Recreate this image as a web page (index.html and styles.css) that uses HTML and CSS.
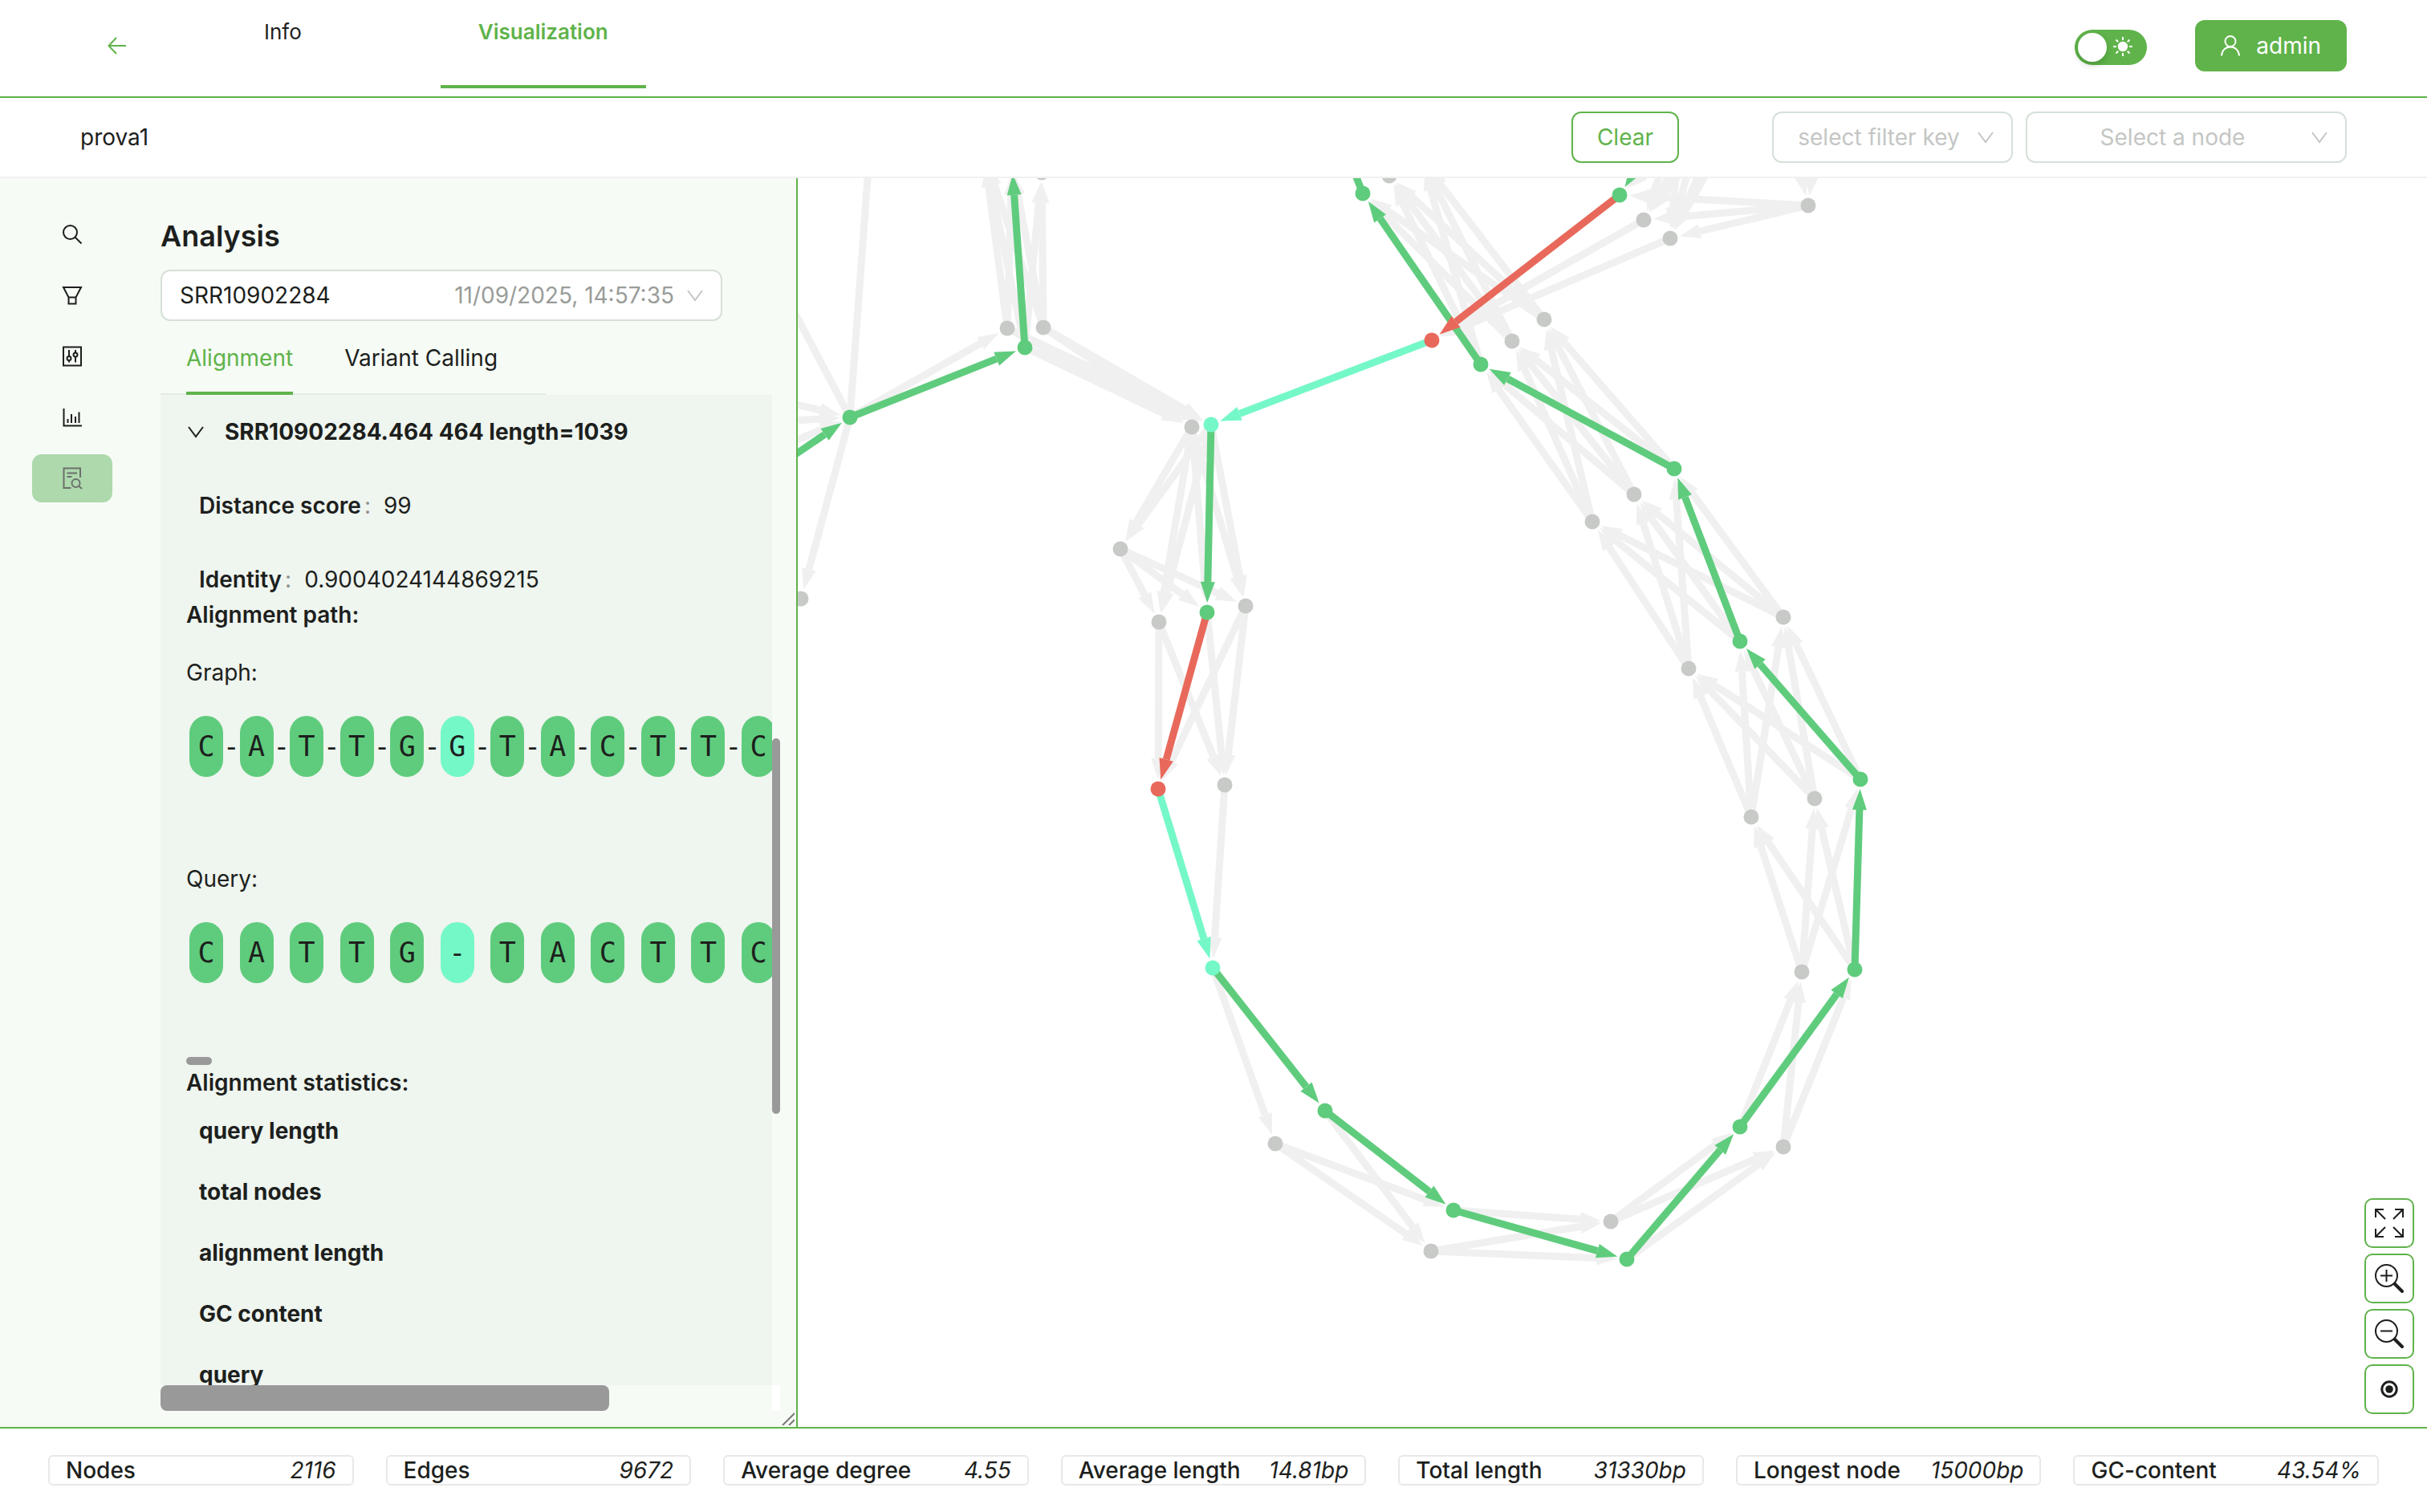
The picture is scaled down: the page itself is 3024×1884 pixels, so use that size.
FILE: index.html
```
<!DOCTYPE html>
<html lang="en">
<head>
    <meta charset="UTF-8">
    <meta name="viewport" content="width=device-width, initial-scale=1.0">
    <title>prova1 - Visualization</title>
    <link rel="stylesheet" href="styles.css">
</head>
<body>
    <header class="header">
        <a class="back" href="#" aria-label="Back">
            <svg class="icon" viewBox="0 0 24 24"><path d="M23 12H2M11 2L1.500 12L11 22"/></svg>
        </a>
        <nav class="main-tabs">
            <a class="main-tab" href="#">Info</a>
            <a class="main-tab active" href="#">Visualization</a>
        </nav>
        <div class="header-right">
            <label class="theme-switch">
                <input type="checkbox" role="switch" aria-label="Light theme" checked>
                <svg class="sun" viewBox="0 0 24 24">
                    <circle cx="12" cy="12" r="5.200"/>
                    <path d="M12 0V4M12 20V24M0 12H4M20 12H24M3.500 3.500L6.200 6.200M17.800 17.800L20.500 20.500M3.500 20.500L6.200 17.800M17.800 6.200L20.500 3.500"/>
                </svg>
            </label>
            <button class="user-btn" type="button">
                <svg class="icon" viewBox="0 0 24 26"><circle cx="12" cy="7.500" r="6.500"/><path d="M1 25.500C1.500 18.500 6 14.500 12 14.500S22.500 18.500 23 25.500"/></svg>
                admin
            </button>
        </div>
    </header>

    <div class="toolbar">
        <span class="graph-name">prova1</span>
        <button class="clear-btn" type="button">Clear</button>
        <div class="filters">
            <div class="select-box filter-key">
                <select aria-label="Filter key"><option>select filter key</option></select>
                <svg class="chevron" viewBox="0 0 20 14"><path d="M1 1L10 13L19 1"/></svg>
            </div>
            <div class="select-box filter-node">
                <select aria-label="Node"><option>Select a node</option></select>
                <svg class="chevron" viewBox="0 0 20 14"><path d="M1 1L10 13L19 1"/></svg>
            </div>
        </div>
    </div>

    <main class="workspace">
        <aside class="sidebar">
            <nav class="side-nav">
                <button type="button" aria-label="Search">
                    <svg class="icon" viewBox="0 0 24 24"><circle cx="9.500" cy="9.500" r="8.500"/><path d="M15.500 15.500L23.500 23.500"/></svg>
                </button>
                <button type="button" aria-label="Filter">
                    <svg class="icon" viewBox="0 0 24 24"><path d="M1 2H23L16.500 14.500V22.500H7.500V14.500ZM7.500 14.500H16.500"/></svg>
                </button>
                <button type="button" aria-label="Settings">
                    <svg class="icon" viewBox="0 0 24 24"><path d="M1 0.500H23V23.500H1ZM8 4V12M8 17V19.500M16 4V7.500M16 12.500V19.500"/><circle cx="8" cy="14.500" r="2.500"/><circle cx="16" cy="10" r="2.500"/></svg>
                </button>
                <button type="button" aria-label="Statistics">
                    <svg class="icon" viewBox="0 0 24 24"><path d="M1.500 1V22.500H24M6.500 14V19M11 8V19M16 11V19M20.500 5.500V19"/></svg>
                </button>
                <button class="active" type="button" aria-label="Analysis">
                    <svg class="icon" viewBox="0 0 24 26"><path d="M22 12V0.500H1.500V25H10.500M5.500 6.500H18M5.500 11H11.500M20.500 23L24 26"/><circle cx="16.500" cy="19" r="5"/></svg>
                </button>
            </nav>

            <section class="analysis">
                <h1>Analysis</h1>
                <div class="select-box run-select">
                    <select aria-label="Analysis run"><option>SRR10902284</option></select>
                    <span class="run-date">11/09/2025, 14:57:35</span>
                    <svg class="chevron" viewBox="0 0 20 14"><path d="M1 1L10 13L19 1"/></svg>
                </div>
                <div class="tabs" role="tablist">
                    <button class="tab active" type="button" role="tab" aria-selected="true">Alignment</button>
                    <button class="tab" type="button" role="tab" aria-selected="false">Variant Calling</button>
                </div>

                <div class="scroll-area">
                    <div class="panel">
                        <button class="collapse-head" type="button">
                            <svg class="chevron" viewBox="0 0 20 14"><path d="M1 1L10 13L19 1"/></svg>
                            SRR10902284.464 464 length=1039
                        </button>
                        <dl class="summary">
                            <div><dt>Distance score</dt><dd>99</dd></div>
                            <div><dt>Identity</dt><dd>0.9004024144869215</dd></div>
                        </dl>
                        <h2>Alignment path:</h2>
                        <p class="seq-label">Graph:</p>
                        <div class="sequence" id="graphSeq"></div>
                        <p class="seq-label query">Query:</p>
                        <div class="sequence" id="querySeq"></div>
                        <div class="seq-scroll"></div>
                        <h2>Alignment statistics:</h2>
                        <ul class="stats">
                            <li>query length</li>
                            <li>total nodes</li>
                            <li>alignment length</li>
                            <li>GC content</li>
                            <li>query</li>
                        </ul>
                    </div>
                    <div class="v-track"><div class="v-thumb"></div></div>
                    <div class="h-track"><div class="h-thumb"></div></div>
                    <div class="scroll-corner"></div>
                </div>
            </section>
            <svg class="resizer" viewBox="0 0 16 16"><path d="M1 16L16 1M9 16L16 9"/></svg>
        </aside>

        <section class="graph">
            <svg id="graph" viewBox="994 222 2030 1556" preserveAspectRatio="xMinYMin meet"></svg>
            <div class="zoom-tools">
                <button type="button" aria-label="Fit">
                    <svg viewBox="0 0 36 36"><path d="M1 11V1H11M1 1L13 13M25 1H35V11M35 1L23 13M1 25V35H11M1 35L13 23M35 25V35H25M35 35L23 23"/></svg>
                </button>
                <button type="button" aria-label="Zoom in">
                    <svg viewBox="0 0 36 36"><circle cx="14.500" cy="14.500" r="13.500"/><path d="M7 14.500H22M14.500 7V22"/><path class="handle" d="M25 25L34 34"/></svg>
                </button>
                <button type="button" aria-label="Zoom out">
                    <svg viewBox="0 0 36 36"><circle cx="14.500" cy="14.500" r="13.500"/><path d="M7 14.500H22"/><path class="handle" d="M25 25L34 34"/></svg>
                </button>
                <button type="button" aria-label="Center">
                    <svg viewBox="0 0 36 36"><circle class="ring" cx="18" cy="18" r="9.200"/><circle class="dot" cx="18" cy="18" r="4.800"/></svg>
                </button>
            </div>
        </section>
    </main>

    <footer class="footer">
        <div class="stat"><span>Nodes</span><em>2116</em></div>
        <div class="stat"><span>Edges</span><em>9672</em></div>
        <div class="stat"><span>Average degree</span><em>4.55</em></div>
        <div class="stat"><span>Average length</span><em>14.81bp</em></div>
        <div class="stat"><span>Total length</span><em>31330bp</em></div>
        <div class="stat"><span>Longest node</span><em>15000bp</em></div>
        <div class="stat"><span>GC-content</span><em>43.54%</em></div>
    </footer>
    <script src="graph.js"></script>
</body>
</html>
```

FILE: styles.css
```
* {
    box-sizing: border-box;
}
body {
    margin: 0;
    height: 100vh;
    display: flex;
    flex-direction: column;
    overflow: hidden;
    font-family: Inter, "Liberation Sans", sans-serif;
    font-size: 28px;
    line-height: 44px;
    color: #1d1f1d;
    background: #fff;
}
button, select {
    font: inherit;
    color: inherit;
    margin: 0;
    padding: 0;
    border: none;
    background: none;
    cursor: pointer;
}
a {
    color: inherit;
    text-decoration: none;
}
svg {
    display: block;
    flex: none;
}
.icon, .chevron {
    fill: none;
    stroke: currentColor;
    stroke-width: 2;
    overflow: visible;
}
.icon {
    width: 24px;
    height: 24px;
}
.chevron {
    width: 20px;
    height: 14px;
}

/* Header */
.header {
    flex: none;
    display: flex;
    height: 122px;
    padding: 0 100px;
    border-bottom: 2px solid #5fb34a;
}
.back {
    padding: 45px 34px;
    color: #5fb34a;
}
.main-tabs {
    display: flex;
    align-items: flex-start;
    gap: 126px;
    margin-left: 90px;
}
.main-tab {
    height: 110px;
    padding: 18px 47px;
    font-size: 26px;
    border-bottom: 4px solid transparent;
}
.main-tab.active {
    color: #5fb34a;
    font-weight: 600;
    border-bottom-color: #5fb34a;
}
.header-right {
    display: flex;
    align-items: flex-start;
    gap: 60px;
    margin-left: auto;
    padding-top: 25px;
}
.theme-switch {
    position: relative;
    margin-top: 12px;
}
.theme-switch input {
    appearance: none;
    display: flex;
    align-items: center;
    width: 90px;
    height: 44px;
    margin: 0;
    padding: 4px;
    border-radius: 22px;
    background: #5fb34a;
}
.theme-switch input::before {
    content: "";
    width: 36px;
    height: 36px;
    border-radius: 50%;
    background: #fff;
    box-shadow: 0 4px 8px rgba(0, 35, 11, 0.2);
}
.sun {
    position: absolute;
    top: 9px;
    right: 18px;
    width: 24px;
    height: 24px;
    fill: #fff;
    stroke: #fff;
    stroke-width: 2;
}
.user-btn {
    display: flex;
    align-items: center;
    gap: 20px;
    height: 64px;
    padding: 0 32px;
    border-radius: 12px;
    background: #5fb34a;
    color: #fff;
}
.user-btn .icon {
    height: 26px;
}

/* Toolbar */
.toolbar {
    flex: none;
    display: flex;
    align-items: center;
    height: 100px;
    padding: 0 100px;
    border-bottom: 2px solid #f0f0f0;
}
.clear-btn {
    height: 64px;
    margin-left: auto;
    padding: 0 30px;
    border: 2px solid #5fb34a;
    border-radius: 12px;
    color: #5fb34a;
}
.filters {
    display: flex;
    gap: 16px;
    margin-left: 116px;
}
.select-box {
    position: relative;
    height: 64px;
    border: 2px solid #d6e0d8;
    border-radius: 12px;
    background: #fff;
}
.select-box select {
    appearance: none;
    width: 100%;
    height: 100%;
    padding: 0 56px 0 22px;
    color: #c4c6c4;
    text-align-last: center;
}
.select-box .chevron {
    position: absolute;
    top: 23px;
    right: 22px;
    color: #c4c6c4;
    pointer-events: none;
}
.filter-key {
    width: 300px;
}
.filter-node {
    width: 400px;
}

/* Workspace */
.workspace {
    flex: 1;
    min-height: 0;
    display: flex;
}
.sidebar {
    position: relative;
    flex: none;
    display: flex;
    gap: 60px;
    width: 994px;
    padding: 40px 20px 20px 40px;
    border-right: 2px solid #5fb34a;
    background: #f6fbf5;
}
.side-nav {
    display: flex;
    flex-direction: column;
    gap: 16px;
}
.side-nav button {
    display: flex;
    align-items: center;
    justify-content: center;
    width: 100px;
    height: 60px;
    border-radius: 12px;
}
.side-nav .active {
    background: #add9ad;
    color: #6c706c;
}
.side-nav .active .icon {
    height: 26px;
}
.resizer {
    position: absolute;
    right: 2px;
    bottom: 2px;
    width: 16px;
    height: 16px;
    fill: none;
    stroke: #777;
    stroke-width: 2;
}
.analysis {
    flex: 1;
    min-width: 0;
    display: flex;
    flex-direction: column;
}
.analysis h1 {
    margin: 0 0 10px;
    font-size: 36px;
    line-height: 64px;
    font-weight: 600;
}
.run-select {
    flex: none;
    width: 700px;
}
.run-select select {
    color: inherit;
    text-align-last: left;
}
.run-date {
    position: absolute;
    top: 8px;
    right: 58px;
    color: #999c99;
    pointer-events: none;
}
.tabs {
    display: flex;
    gap: 64px;
    width: 480px;
    padding: 0 32px;
    box-shadow: inset 0 -2px #e4eae4;
}
.tab {
    height: 92px;
    border-top: 4px solid transparent;
    border-bottom: 4px solid transparent;
    white-space: nowrap;
}
.tab.active {
    color: #5fb34a;
    border-bottom-color: #5fb34a;
}
.scroll-area {
    flex: 1;
    min-height: 0;
    display: grid;
    grid-template-columns: 1fr 10px;
    grid-template-rows: minmax(0, 1fr) 32px;
}
.panel {
    overflow: hidden;
    padding: 0 32px;
    background: #eff5ef;
}
.collapse-head {
    display: flex;
    align-items: center;
    gap: 26px;
    height: 92px;
    padding-left: 2px;
    font-weight: 700;
}
.summary {
    margin: 0;
}
.summary div {
    display: flex;
    padding: 24px 16px;
}
.summary div:last-child {
    padding-bottom: 0;
}
.summary dt {
    font-weight: 600;
}
.summary dt::after {
    content: ":";
    margin: 0 16px 0 4px;
    font-weight: 400;
    color: #8c908c;
}
.summary dd {
    margin: 0;
}
.panel h2 {
    margin: 0;
    font-size: 28px;
    line-height: 44px;
    font-weight: 600;
}
.seq-label {
    margin: 28px 0 32px;
}
.seq-label.query {
    margin-top: 105px;
}
.sequence {
    display: flex;
    width: 730px;
    margin-left: 4px;
    font-family: "DejaVu Sans Mono", monospace;
    font-size: 35px;
    line-height: 76px;
    text-align: center;
}
.base {
    flex: none;
    width: 42px;
    border-radius: 21px;
    background: #5fcc7d;
}
.base.gap {
    background: #75f8c8;
}
.link {
    flex: 1;
    min-width: 0;
    display: flex;
    justify-content: center;
}
.seq-scroll {
    width: 32px;
    height: 10px;
    margin-top: 92px;
    border-radius: 5px;
    background: #999;
}
.stats {
    list-style: none;
    margin: 16px 0 0;
    padding: 0 16px;
    font-weight: 700;
}
.stats li {
    margin-bottom: 32px;
}
.v-thumb {
    height: 468px;
    margin-top: 428px;
    border-radius: 5px;
    background: #999;
}
.h-thumb {
    width: 559px;
    height: 32px;
    border-radius: 8px;
    background: #999;
}
.scroll-corner {
    background: #fff;
}

/* Graph canvas */
.graph {
    position: relative;
    flex: 1;
    min-width: 0;
    overflow: hidden;
}
#graph {
    width: 100%;
    height: 100%;
}
.edge line {
    stroke: currentColor;
    stroke-width: 9;
}
.edge polygon {
    fill: currentColor;
}
.edge { color: #f0f0f0; }
.edge.match { color: #5fcc7d; }
.edge.gap { color: #75f8c8; }
.edge.mismatch { color: #e8695b; }
.node {
    fill: #c8cac8;
}
.node.match { fill: #5fcc7d; }
.node.gap { fill: #75f8c8; }
.node.mismatch { fill: #e8695b; }
.zoom-tools {
    position: absolute;
    right: 16px;
    bottom: 16px;
    display: flex;
    flex-direction: column;
    gap: 7px;
}
.zoom-tools button {
    display: flex;
    align-items: center;
    justify-content: center;
    width: 62px;
    height: 62px;
    border: 2px solid #5fb34a;
    border-radius: 10px;
    background: #fff;
}
.zoom-tools svg {
    width: 36px;
    height: 36px;
    fill: none;
    stroke: #1d1f1d;
    stroke-width: 2;
}
.zoom-tools .handle {
    stroke-width: 4;
    stroke-linecap: round;
}
.zoom-tools .ring {
    stroke-width: 3;
}
.zoom-tools .dot {
    fill: #1d1f1d;
    stroke: none;
}

/* Footer */
.footer {
    flex: none;
    display: flex;
    align-items: flex-start;
    gap: 40px;
    height: 106px;
    padding: 33px 60px;
    border-top: 2px solid #5fb34a;
}
.stat {
    flex: 1;
    display: flex;
    justify-content: space-between;
    padding: 0 20px;
    border: 2px solid #e8e8e8;
    border-radius: 6px;
    line-height: 34px;
    white-space: nowrap;
}
.stat span {
    font-weight: 500;
}
```

FILE: graph.js
```
// id: [x, y, type]
const nodes = {
    h: [1059, 520, "match"], a1: [1255, 409], a2: [1300, 408], a3: [1277, 433, "match"],
    b: [998, 746], c: [1485, 532], d: [1509, 529, "gap"], e: [1396, 684], f: [1444, 775],
    g: [1504, 763, "match"], i: [1552, 755],
    t1: [1227, 195], t2: [1261, 205, "match"], t3: [1298, 215],
    k: [1698, 241, "match"], l: [1731, 219], n3: [1772, 200],
    m: [2018, 243, "match"], n: [2048, 274], o: [2081, 297], p: [2253, 256],
    q: [1924, 398], r: [1884, 425], s: [1784, 424, "mismatch"], t: [1845, 454, "match"],
    u: [2086, 584, "match"], v: [2036, 616], w: [1984, 650],
    x: [2222, 769], y: [2168, 799, "match"], z: [2104, 833],
    A: [2182, 1018], B: [2261, 995], C: [2318, 971, "match"],
    D: [2245, 1211], E: [2311, 1208, "match"], F: [2168, 1404, "match"], G: [2222, 1429],
    H: [2007, 1522], I: [2027, 1569, "match"], K: [1811, 1508, "match"], L: [1783, 1559],
    g3: [1651, 1384, "match"], gr: [1589, 1425],
    m2: [1443, 983, "mismatch"], f2: [1526, 978], d2: [1511, 1206, "gap"],
    // outside of the visible area
    w1: [850, 470], w2: [850, 532], w3: [850, 610], w4: [850, 662], w5: [935, 285],
    n1: [1093, 60], k0: [1670, 170, "match"], m0: [2052, 190, "match"],
    p1: [2228, 150], p2: [2266, 150], u1: [2095, 140], u2: [2120, 150], u3: [2150, 145], u4: [2180, 120]
};

// "from>to to to"
const edges = [
    "w1>h", "w2>h", "w3>h", "h>b a1 a3",
    "a1>t1 t2 c d", "a2>t1 t2 t3 c d", "a3>t1 t3 c d",
    "c>e f g i", "d>e f g i", "e>f g i", "f>m2 f2", "g>f2", "i>m2 f2",
    "f2>d2", "d2>gr", "gr>K L", "g3>L", "K>H", "L>H I", "H>F G", "I>G", "F>D", "G>D E",
    "D>A B C", "E>A B", "A>x y z", "B>x y z", "C>x z",
    "x>u v w", "y>v w", "z>u v w", "u>q r", "v>q r t", "w>q r t",
    "q>k l n3", "r>k l n3", "t>l n3", "n>s", "o>s",
    "h>n1 w5", "p>m n o", "p1>p", "p2>p", "u1>m n o", "u2>m n o", "u3>n o", "u4>o"
];
const path = [
    ["w4", "h", "match"], ["h", "a3", "match"], ["a3", "t2", "match"], ["t", "k", "match"],
    ["k", "k0", "match"], ["m0", "m", "match"], ["m", "s", "mismatch"], ["s", "d", "gap"],
    ["d", "g", "match"], ["g", "m2", "mismatch"], ["m2", "d2", "gap"], ["d2", "g3", "match"],
    ["g3", "K", "match"], ["K", "I", "match"], ["I", "F", "match"], ["F", "E", "match"],
    ["E", "C", "match"], ["C", "y", "match"], ["y", "u", "match"], ["u", "t", "match"]
];

function drawEdge(from, to, type) {
    const [x1, y1] = nodes[from];
    const [x2, y2] = nodes[to];
    const len = Math.hypot(x2 - x1, y2 - y1);
    const dx = (x2 - x1) / len;
    const dy = (y2 - y1) / len;
    const tipX = x2 - dx * 12, tipY = y2 - dy * 12;
    const baseX = x2 - dx * 38, baseY = y2 - dy * 38;
    return `<g class="edge ${type}">
        <line x1="${x1}" y1="${y1}" x2="${baseX}" y2="${baseY}"/>
        <polygon points="${tipX},${tipY} ${baseX - dy * 9},${baseY + dx * 9} ${baseX + dy * 9},${baseY - dx * 9}"/>
    </g>`;
}

let svg = "";
edges.forEach(edge => {
    const [from, targets] = edge.split(">");
    targets.split(" ").forEach(to => svg += drawEdge(from, to, ""));
});
path.forEach(([from, to, type]) => svg += drawEdge(from, to, type));
Object.values(nodes).forEach(([x, y, type = ""]) => {
    svg += `<circle class="node ${type}" cx="${x}" cy="${y}" r="9.500"/>`;
});
document.getElementById("graph").innerHTML = svg;

function drawSequence(id, bases, gapIndex, separator) {
    document.getElementById(id).innerHTML = [...bases].map((base, i) =>
        `<span class="base ${i === gapIndex ? "gap" : ""}">${base}</span>`
    ).join(`<span class="link">${separator}</span>`);
}

drawSequence("graphSeq", "CATTGGTACTTC", 5, "-");
drawSequence("querySeq", "CATTG-TACTTC", 5, "");
```
